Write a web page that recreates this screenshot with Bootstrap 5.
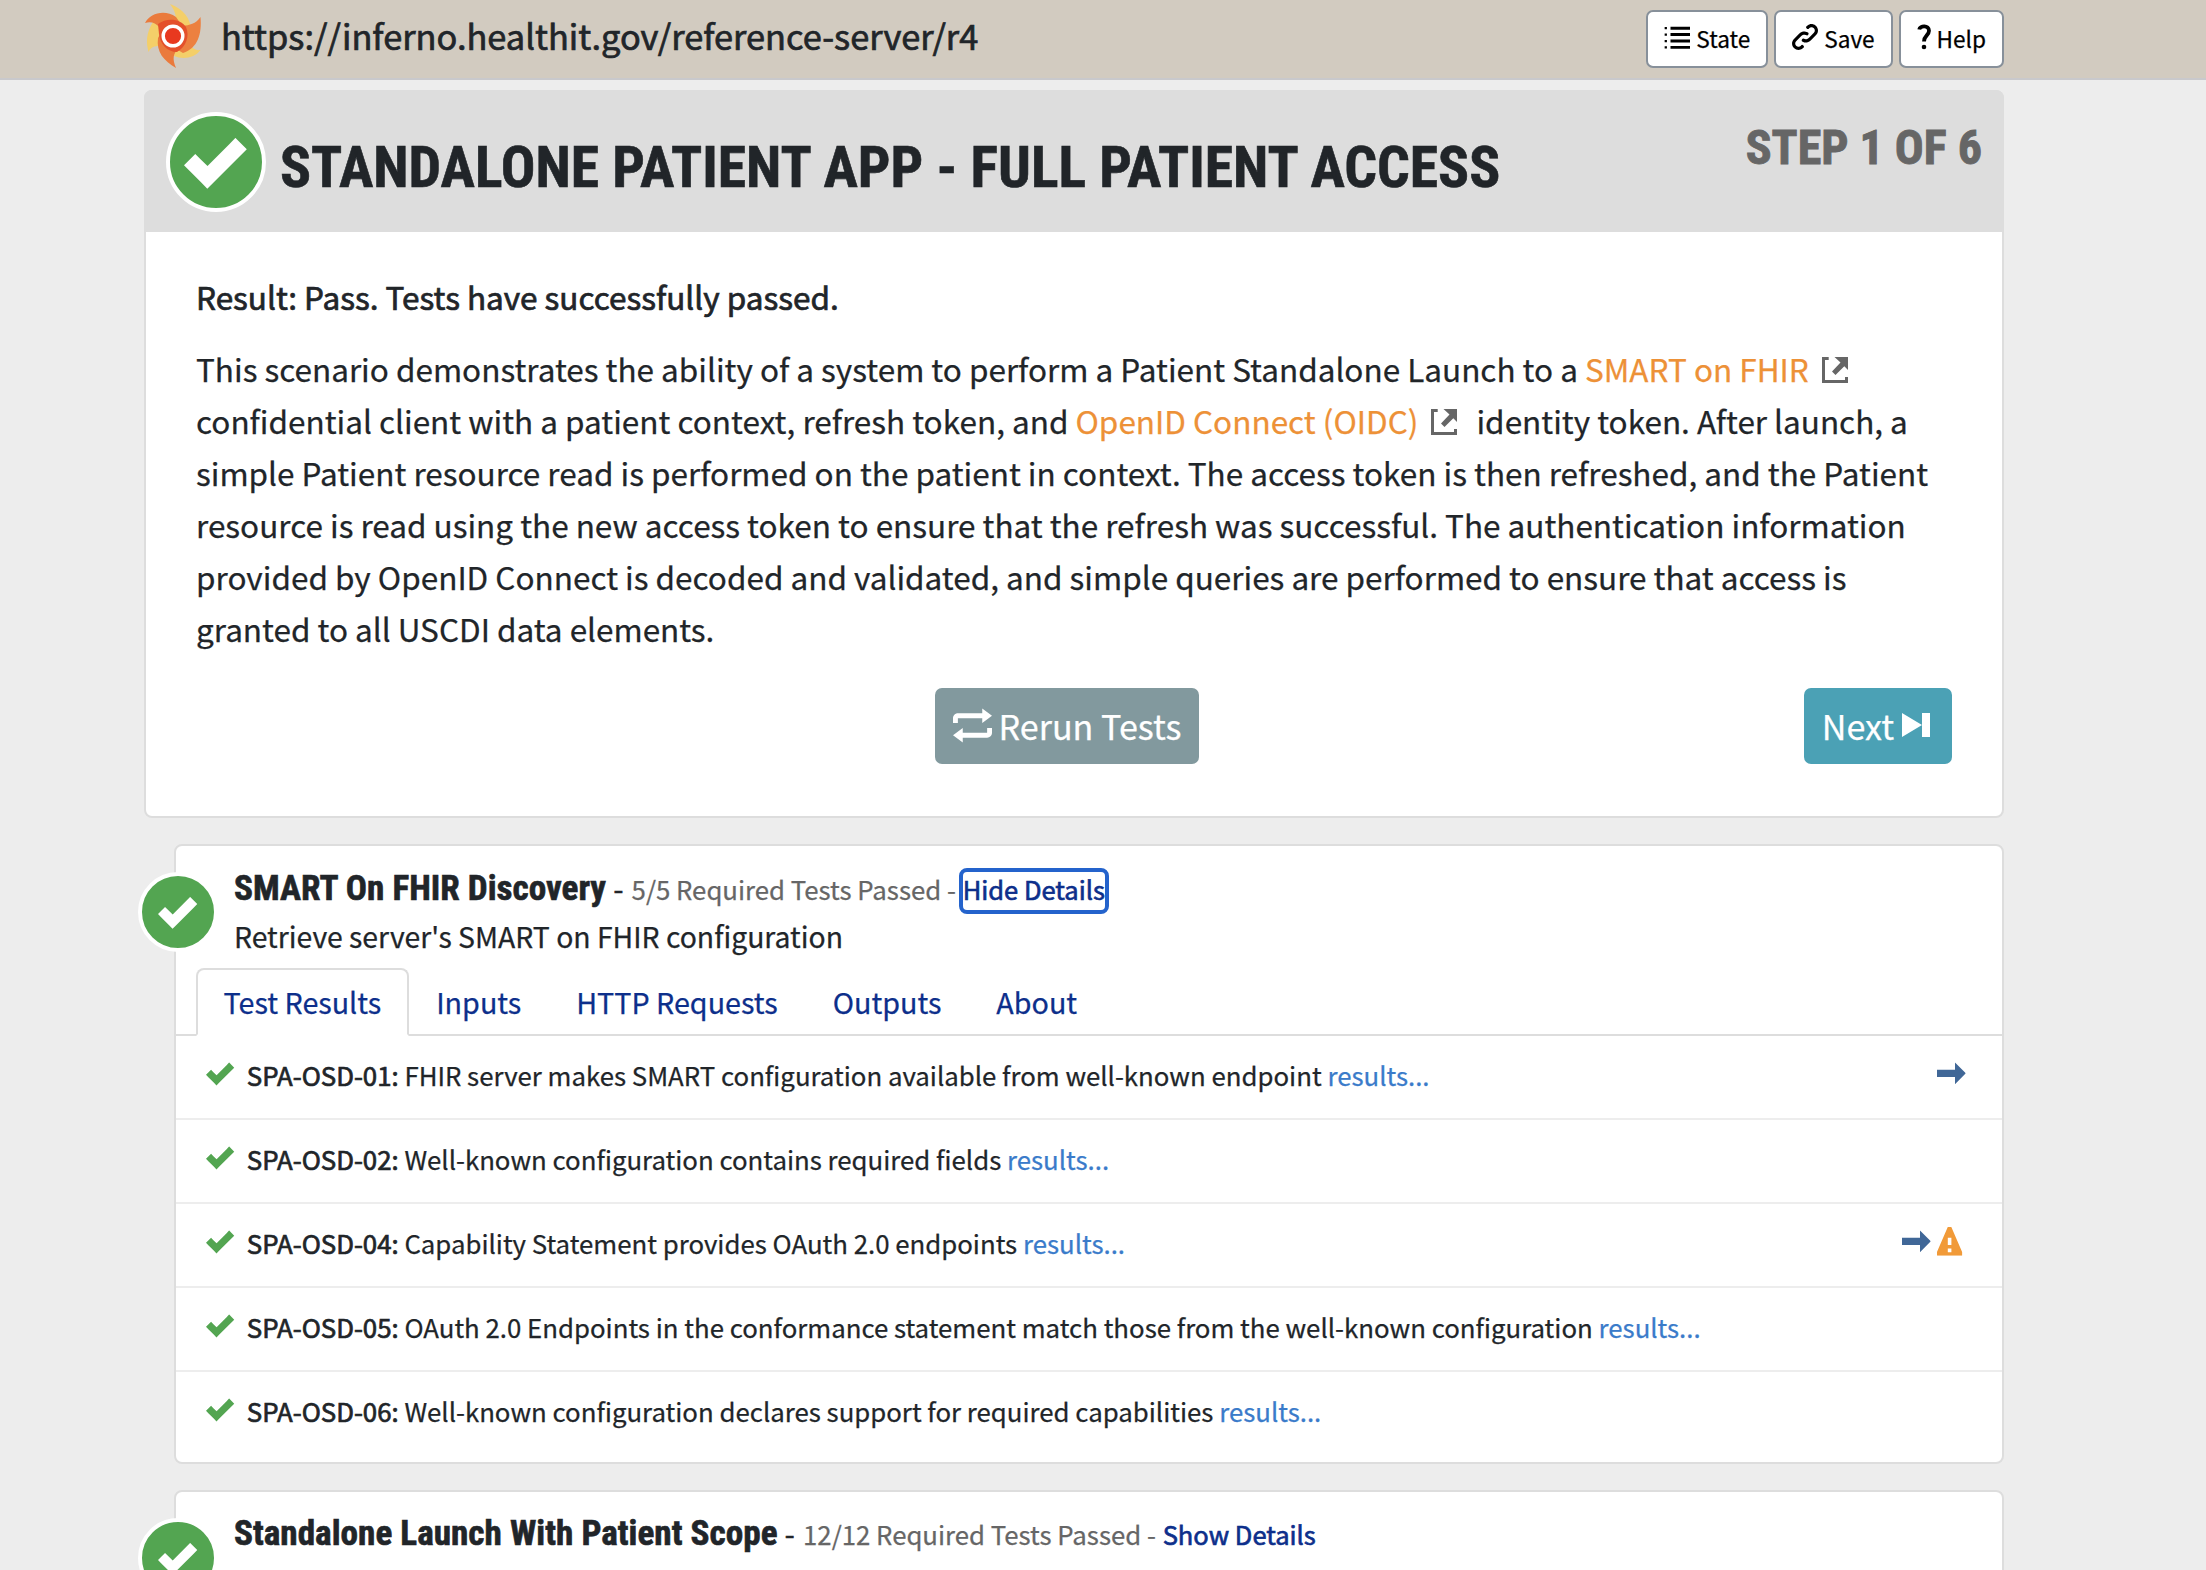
<!DOCTYPE html>
<html lang="en">
<head>
<meta charset="utf-8">
<title>Inferno</title>
<link href="https://cdn.jsdelivr.net/npm/bootstrap@5.3.0/dist/css/bootstrap.min.css" rel="stylesheet">
<style>
  body { background: #ededed; font-family: "Noto Sans CJK SC", "Source Sans Pro", sans-serif; color: #212529; overflow: hidden; height: 1570px; -webkit-text-stroke: .25px currentColor; }
  a { text-decoration: none; }
  .shell { width: 1860px; margin-left: 144px; }
  .topbar { height: 80px; background: #d2cbc0; border-bottom: 2px solid #c9c9cc; }
  .logo { width: 56px; height: 64px; margin: 4px 20px 0 1px; overflow: visible; }
  .server-url { font-size: 34.38px; line-height: 52px; margin-top: 9px; }
  .semi { -webkit-text-stroke: .7px currentColor; }
  .tools { gap: 6px; }
  .tool-btn { --bs-btn-padding-x: 16px; --bs-btn-padding-y: 0; --bs-btn-border-width: 2px; --bs-btn-border-radius: 7px; --bs-btn-bg: #fff; --bs-btn-color: #000; --bs-btn-border-color: #87909a; height: 58px; padding-top: 7px; font-size: 22.6px; line-height: 40px; margin-top: 10px; }
  .tool-btn svg { width: 26px; height: 26px; margin-right: 6px; margin-top: 5px; }
  .tool-btn .q-icon { width: 14px; }
  .cond { font-family: "Roboto Condensed", Roboto, sans-serif; font-stretch: 75%; font-weight: 700; -webkit-text-stroke: .6px currentColor; }
  .panel { background: #fff; border: 2px solid #ddd; border-radius: 8px; position: relative; }
  .seq-head { background: #ddd; height: 142px; margin: -2px -2px 0; border-radius: 8px 8px 0 0; }
  .status { border-radius: 50%; border: 4px solid #fff; background: #53a551; color: #fff; display: flex; align-items: center; justify-content: center; }
  .status-lg { width: 100px; height: 100px; margin: 22px 14px 0 22px; flex: none; }
  .status-lg svg { width: 64px; height: 64px; }
  .status-sm { width: 80px; height: 80px; position: absolute; left: -38px; top: 26px; }
  .status-sm svg { width: 40px; height: 40px; }
  .seq-title { font-size: 57.600px; line-height: 70px; margin: 43px 0 0; }
  .seq-step { font-size: 48px; line-height: 60px; margin: 28px 22px 0 auto; color: #666; -webkit-text-stroke: .9px currentColor; }
  .seq-body { padding: 38px 50px 52px; font-size: 31.51px; line-height: 52px; }
  .seq-body p { margin: 0 0 20px; white-space: nowrap; }
  .ext { color: #ed9137; }
  .ext-icon { width: 26px; height: 26px; margin: -6px 12px 0 13px; color: #666; }
  .actions { display: grid; grid-template-columns: 1fr auto 1fr; margin-top: 34px; padding-right: 14px; }
  .act { --bs-btn-color: #fff; --bs-btn-border-width: 0; --bs-btn-border-radius: 7px; font-size: 34.1px; line-height: 56px; height: 76px; padding: 9px 18px 11px; }
  .act-rerun { --bs-btn-bg: #82999e; }
  .act-next { --bs-btn-bg: #4ba1b5; justify-self: end; margin-right: -14px; }
  .act-rerun svg { width: 39px; height: 39px; margin-right: 7px; }
  .act-next svg { width: 32px; height: 32px; margin-left: 8px; }
  .grp { margin-top: 26px; margin-left: 30px; }
  .grp-head { padding: 19.5px 0 12px 58px; font-size: 28.35px; }
  .grp-name { font-size: 35.2px; }
  .grp-line { line-height: 44px; height: 44px; white-space: nowrap; }
  .grp-desc { line-height: 40px; margin-top: 6px; }
  .grp-count { font-size: 25.75px; color: #666; margin-left: 2px; }
  .dash { margin-left: 1px; }
  .navy { color: #0d2f8b; }
  .toggle { display: inline-block; font-size: 25.5px; line-height: 34px; padding-bottom: 4px; -webkit-text-stroke: .65px currentColor; margin-left: 1px; }
  .toggle.on { outline: 4px solid #2463cc; border-radius: 4px; }
  .tabs { --bs-nav-tabs-border-width: 2px; --bs-nav-tabs-border-color: #ddd; --bs-nav-tabs-border-radius: 8px; --bs-nav-tabs-link-active-border-color: #ddd #ddd #fff; --bs-nav-tabs-link-active-color: #0d2f8b; --bs-nav-link-color: #0d2f8b; padding-left: 20px; font-size: 28.7px; line-height: 48px; }
  .tabs .nav-link { padding: 8px 25.500px; font-size: inherit; }
  .trow { height: 84px; border-bottom: 2px solid #ededed; padding: 19px 36px 0 30px; font-size: 25.79px; line-height: 40px; white-space: nowrap; }
  .trow:last-child { height: 90px; border: 0; }
  .trow svg { width: 28.8px; height: 28.8px; margin-top: 4.4px; flex: none; }
  .trow .ok { color: #53a551; margin-right: 12px; }
  .trow a { color: #3a7bca; }
  .trow .go { color: #406797; }
  .trow .warn { color: #f19a38; margin-left: 6px; }
</style>
<script src="https://cdn.jsdelivr.net/npm/bootstrap@5.3.0/dist/js/bootstrap.bundle.min.js"></script>
</head>
<body>
<svg class="d-none">
  <symbol id="check" viewBox="0 0 8 8"><path fill="currentColor" transform="translate(0 1)" d="M6.41 0l-.69.72-2.78 2.78-.81-.78-.72-.72-1.41 1.41.72.72 1.5 1.5.69.72.72-.72 3.5-3.5.72-.72-1.41-1.41z"/></symbol>
  <symbol id="arrow" viewBox="0 0 8 8"><path fill="currentColor" transform="translate(0 1)" d="M5 0v2h-5v2h5v2l3-3.03-3-2.97z"/></symbol>
  <symbol id="warning" viewBox="0 0 8 8"><path fill="currentColor" d="M3.09 0c-.06 0-.1.04-.13.09l-2.94 6.81c-.02.05-.03.13-.03.19v.81c0 .05.04.09.09.09h6.81c.05 0 .09-.04.09-.09v-.81c0-.05-.01-.14-.03-.19l-2.94-6.81c-.02-.05-.07-.09-.13-.09h-.81zm-.09 3h1v2h-1v-2zm0 3h1v1h-1v-1z"/></symbol>
  <symbol id="ext" viewBox="0 0 26 26"><path d="M6.7 1.5H1.5V24.5H24.5V20" fill="none" stroke="currentColor" stroke-width="3"/><path d="M12.5 0H26V13L22.3 9.300L13.500 18L10 14.500L18.500 5.500z" fill="currentColor"/></symbol>
</svg>

<header class="topbar">
  <div class="shell d-flex align-items-start">
    <svg class="logo" viewBox="0 0 56 64">
      <path fill="#f4cf69" d="M25 0C38 5 46 14 46 27L30 24C32 14 31 8 25 0z"/>
      <path fill="#f4cf69" d="M8 18C1 29 1 38 3.500 48C7 41 12 42 18 42L14 22z"/>
      <path fill="#f4cf69" d="M55.500 46C50 54 38 56 29 52L30 40L44 39C46 43 50 47 55.500 46z"/>
      <path fill="#ea7a3c" d="M0 19C5 9 20 5 31 13L40 26L20 34C16 24 11 16 0 19z"/>
      <path fill="#ec8040" d="M55.500 13C57 30 53 44 38 49L26 42L38 22C44 21 51 20 55.500 13z"/>
      <path fill="#ea7a3c" d="M31 64C19 57 11 48 13 34L20 22L34 44C28 49 27 55 31 64z"/>
      <path fill="#e4502b" d="M13 20C22 13 36 15 41 23C45 32 41 43 32 48C22 48 15 40 14 30z"/>
      <circle cx="28" cy="32" r="9.800" fill="#e8391f" stroke="#fff" stroke-width="3.400"/>
    </svg>
    <div class="server-url semi">https://inferno.healthit.gov/reference-server/r4</div>
    <div class="tools d-flex ms-auto">
      <button class="btn tool-btn d-flex align-items-start"><svg viewBox="0 0 8 8"><path d="M2 1.300h6M2 3.250h6M2 5.250h6M2 7.200h6" stroke="#000" stroke-width=".9"/><path d="M.2 1.300h.7M.2 3.250h.7M.2 5.250h.7M.2 7.200h.7" stroke="#000" stroke-width=".7"/></svg>State</button>
      <button class="btn tool-btn d-flex align-items-start"><svg viewBox="0 0 8 8"><path d="M5.880.03c-.18.01-.36.03-.53.09-.27.1-.53.25-.75.47a.5.5 0 1 0 .69.69c.11-.11.24-.17.38-.22.35-.12.78-.07 1.060.22.39.39.39 1.040 0 1.440l-1.500 1.500c-.44.44-.8.48-1.060.47-.26-.01-.41-.13-.41-.13a.5.5 0 1 0-.5.88s.34.22.84.25c.5.03 1.200-.16 1.810-.78l1.500-1.500c.78-.78.78-2.040 0-2.810-.28-.28-.61-.45-.97-.53-.18-.04-.38-.04-.56-.03zm-2 2.310c-.5-.02-1.190.15-1.780.75l-1.500 1.500c-.78.78-.78 2.040 0 2.810.56.56 1.360.72 2.060.47.27-.1.53-.25.75-.47a.5.5 0 1 0-.69-.69c-.11.11-.24.17-.38.22-.35.12-.78.07-1.060-.22-.39-.39-.39-1.040 0-1.440l1.500-1.500c.4-.4.75-.45 1.030-.44.28.01.47.09.47.09a.5.5 0 1 0 .44-.88s-.34-.2-.84-.22z"/></svg>Save</button>
      <button class="btn tool-btn d-flex align-items-start"><svg class="q-icon" viewBox="0 0 14 26"><path d="M2.200 5.500C3 1.200 12 .8 12 6.800C12 11.500 7 11.500 7 17.500" fill="none" stroke="#000" stroke-width="3.800"/><circle cx="7" cy="23" r="2.300"/></svg>Help</button>
    </div>
  </div>
</header>

<main class="shell" style="margin-top:10px">
  <section class="panel">
    <div class="seq-head d-flex align-items-start">
      <span class="status status-lg"><svg><use href="#check"/></svg></span>
      <h1 class="seq-title cond">STANDALONE PATIENT APP - FULL PATIENT ACCESS</h1>
      <div class="cond seq-step">STEP 1 OF 6</div>
    </div>
    <div class="seq-body">
      <p class="semi">Result: Pass. Tests have successfully passed.</p>
      <p class="mb-0">This scenario demonstrates the ability of a system to perform a Patient Standalone Launch to a <a class="ext" href="#">SMART on FHIR</a><svg class="ext-icon"><use href="#ext"/></svg><br>
      confidential client with a patient context, refresh token, and <a class="ext" href="#">OpenID Connect (OIDC)</a><svg class="ext-icon"><use href="#ext"/></svg> identity token. After launch, a<br>
      simple Patient resource read is performed on the patient in context. The access token is then refreshed, and the Patient<br>
      resource is read using the new access token to ensure that the refresh was successful. The authentication information<br>
      provided by OpenID Connect is decoded and validated, and simple queries are performed to ensure that access is<br>
      granted to all USCDI data elements.</p>
      <div class="actions">
        <span></span>
        <button class="btn act act-rerun d-flex align-items-center"><svg viewBox="0 0 8 8"><path fill="#fff" d="M6 .5v1h-5c-.55 0-1 .45-1 1v1h1v-1h5v1l2-1.500-2-1.500zm-4 4l-2 1.500 2 1.500v-1h5c.55 0 1-.45 1-1v-1h-1v1h-5v-1z"/></svg>Rerun Tests</button>
        <button class="btn act act-next d-flex align-items-center">Next<svg viewBox="0 0 8 8"><path fill="#fff" d="M0 1v6l5-3-5-3zm5 3v3h2v-6h-2v3z"/></svg></button>
      </div>
    </div>
  </section>

  <section class="panel grp">
    <span class="status status-sm"><svg><use href="#check"/></svg></span>
    <div class="grp-head">
      <div class="grp-line"><span class="grp-name cond">SMART On FHIR Discovery</span> <span class="dash semi">-</span> <span class="grp-count">5/5 Required Tests Passed - </span><a class="toggle on navy" href="#">Hide Details</a></div>
      <div class="grp-desc">Retrieve server's SMART on FHIR configuration</div>
    </div>
    <ul class="nav nav-tabs tabs">
      <li class="nav-item"><a class="nav-link active" href="#">Test Results</a></li>
      <li class="nav-item"><a class="nav-link" href="#">Inputs</a></li>
      <li class="nav-item"><a class="nav-link" href="#">HTTP Requests</a></li>
      <li class="nav-item"><a class="nav-link" href="#">Outputs</a></li>
      <li class="nav-item"><a class="nav-link" href="#">About</a></li>
    </ul>
    <div>
      <div class="trow d-flex align-items-start"><svg class="ok"><use href="#check"/></svg><div><span class="semi">SPA-OSD-01:</span> FHIR server makes SMART configuration available from well-known endpoint <a href="#">results...</a></div><svg class="go ms-auto"><use href="#arrow"/></svg></div>
      <div class="trow d-flex align-items-start"><svg class="ok"><use href="#check"/></svg><div><span class="semi">SPA-OSD-02:</span> Well-known configuration contains required fields <a href="#">results...</a></div></div>
      <div class="trow d-flex align-items-start"><svg class="ok"><use href="#check"/></svg><div><span class="semi">SPA-OSD-04:</span> Capability Statement provides OAuth 2.0 endpoints <a href="#">results...</a></div><svg class="go ms-auto"><use href="#arrow"/></svg><svg class="warn"><use href="#warning"/></svg></div>
      <div class="trow d-flex align-items-start"><svg class="ok"><use href="#check"/></svg><div><span class="semi">SPA-OSD-05:</span> OAuth 2.0 Endpoints in the conformance statement match those from the well-known configuration <a href="#">results...</a></div></div>
      <div class="trow d-flex align-items-start"><svg class="ok"><use href="#check"/></svg><div><span class="semi">SPA-OSD-06:</span> Well-known configuration declares support for required capabilities <a href="#">results...</a></div></div>
    </div>
  </section>

  <section class="panel grp">
    <span class="status status-sm"><svg><use href="#check"/></svg></span>
    <div class="grp-head">
      <div class="grp-line"><span class="grp-name cond">Standalone Launch With Patient Scope</span> <span class="dash semi">-</span> <span class="grp-count">12/12 Required Tests Passed - </span><a class="toggle navy" href="#">Show Details</a></div>
      <div class="grp-desc">&nbsp;</div>
    </div>
  </section>
</main>
</body>
</html>
